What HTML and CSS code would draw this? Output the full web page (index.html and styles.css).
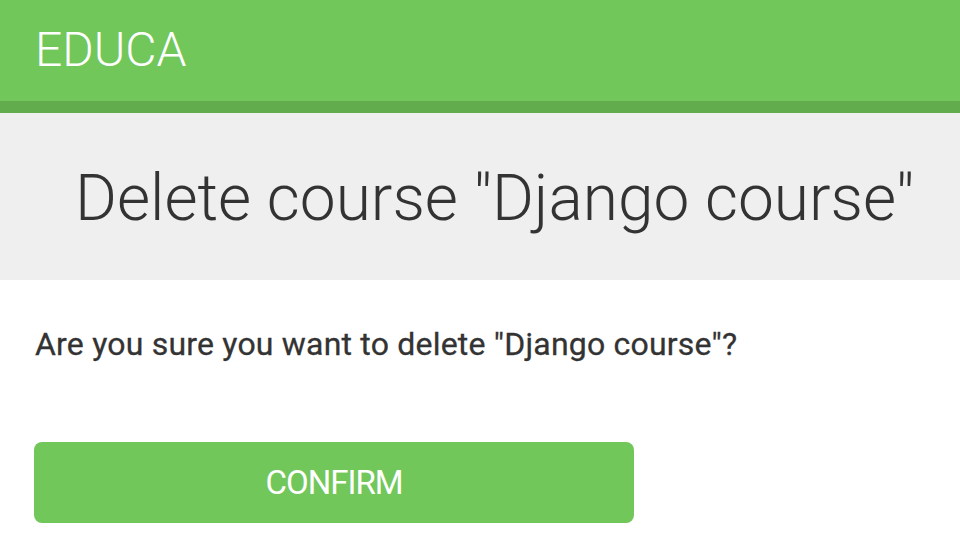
FILE: index.html
```html
<!DOCTYPE html>
<html>
<head>
<meta charset="utf-8">
<link rel="stylesheet" href="styles.css">
</head>
<body>
<div class="header">
  <span class="logo">EDUCA</span>
</div>
<div class="title-bar">
  <h1>Delete course "Django course"</h1>
</div>
<div class="module">
  <form>
    <p>Are you sure you want to delete "Django course"?</p>
    <button type="button" class="confirm">CONFIRM</button>
  </form>
</div>
</body>
</html>
```
FILE: styles.css
```css
html, body {
  margin: 0;
  padding: 0;
  background: #ffffff;
  font-family: Roboto, "Liberation Sans", sans-serif;
  color: #333333;
  overflow: hidden;
}
.header {
  height: 101px;
  background: #71c75a;
  border-bottom: 12px solid #63ac4d;
  display: flex;
  align-items: center;
  padding-left: 35px;
}
.logo {
  color: #ffffff;
  font-weight: 300;
  font-size: 48px;
  line-height: 1;
  margin-top: -2px;
}
.title-bar {
  background: #efefef;
  height: 167px;
  display: flex;
  align-items: center;
  padding-left: 75px;
}
.title-bar h1 {
  margin: 4px 0 0;
  font-weight: 300;
  font-size: 64px;
  line-height: 1;
  color: #333333;
}
.module {
  padding: 44px 0 0 35px;
}
.module p {
  margin: 0;
  font-size: 32px;
  line-height: 40px;
  letter-spacing: 0.2px;
  color: #333333;
  -webkit-text-stroke: 0.3px #333333;
}
.confirm {
  margin-top: 78px;
  width: 600px;
  height: 81px;
  margin-left: -1px;
  background: #71c75a;
  border: none;
  border-radius: 8px;
  color: #ffffff;
  font-family: Roboto, "Liberation Sans", sans-serif;
  font-size: 33px;
  letter-spacing: -1px;
  display: flex;
  align-items: center;
  justify-content: center;
  padding: 0;
}
```
